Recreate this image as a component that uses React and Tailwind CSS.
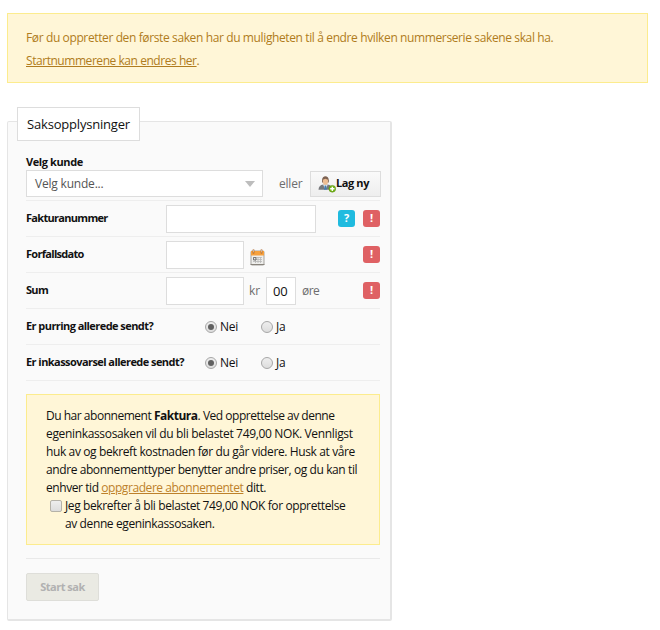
import { useState } from 'react';

function ErrorBadge() {
  return (
    <span className="flex h-[17px] w-[17px] items-center justify-center rounded-[3px] bg-[#df6164] text-[11px] font-bold text-white">
      !
    </span>
  );
}

function HelpBadge() {
  return (
    <span className="flex h-[17px] w-[17px] items-center justify-center rounded-[3px] bg-[#20bbdf] text-[11px] font-bold text-white">
      ?
    </span>
  );
}

function UserAddIcon() {
  return (
    <svg className="h-[18px] w-[18px] shrink-0" viewBox="0 0 17 17">
      <path d="M.5 14c0-3 1.500-4.500 4.500-5h4c3 .5 4.500 2 4.500 5z" fill="#77787c" />
      <path d="M4.800 9h4.400L7 14z" fill="#e9eff5" />
      <path d="M6.300 10h1.500l.5 4H5.700z" fill="#427caf" />
      <path d="M3.800 5c0-5 6.400-5 6.400 0v2H3.800z" fill="#7d6252" />
      <path d="M4.600 4.500 7 3.500l2.400 1v2C9.400 8.200 8.200 9.300 7 9.300S4.600 8.200 4.600 6.500z" fill="#edbd93" />
      <circle cx="13.500" cy="13" r="3.200" fill="#76b51b" stroke="#568d0d" strokeWidth=".5" />
      <path d="M13.500 11v4M11.500 13h4" stroke="#fff" strokeWidth="1.300" />
    </svg>
  );
}

function CalendarIcon() {
  return (
    <svg className="h-[17px] w-[15px]" viewBox="0 0 15 17">
      <rect x="1" y="2" width="13" height="14" rx="1" fill="#eeeeec" stroke="#a5a39f" />
      <path d="M.5 15.500h14" stroke="#89847c" />
      <path d="M1 2h13v4.500H1z" fill="#f6a13e" />
      <path d="M3.500.5v4M11.500.5v4" stroke="#a96024" strokeWidth="1.600" />
      <path d="M3.500 1v2.500M11.500 1v2.500" stroke="#e8d8c8" strokeWidth=".7" />
      <path d="M3 8.500h9M3 10.500h9M3 12.500h9M5.500 8v6M8 8v6M10.500 8v6" stroke="#b7b7b7" strokeWidth=".8" />
      <path d="M3.500 8.500h2.500v2.500H3.500z" fill="none" stroke="#777" />
    </svg>
  );
}

function Radio({ label, checked, onChange }) {
  return (
    <label className="flex w-14 items-center text-[12px] tracking-[-0.2px]">
      <input type="radio" className="sr-only" checked={checked} onChange={onChange} />
      <span className="mr-[3px] flex h-[12px] w-[12px] shrink-0 items-center justify-center rounded-full border border-[#a7a7a7] bg-linear-to-b from-[#eeeeee] to-[#dddddd]">
        {checked && <span className="h-[6px] w-[6px] rounded-full bg-[#606060]" />}
      </span>
      {label}
    </label>
  );
}

function Question({ label }) {
  const [answer, setAnswer] = useState('nei');

  return (
    <div className="flex h-9 items-center border-b border-[#eeeeee]">
      <span className="w-[179px] whitespace-nowrap text-[11px] font-bold tracking-[-0.56px]">{label}</span>
      <Radio label="Nei" checked={answer === 'nei'} onChange={() => setAnswer('nei')} />
      <Radio label="Ja" checked={answer === 'ja'} onChange={() => setAnswer('ja')} />
    </div>
  );
}

function Row({ label, children }) {
  return (
    <div className="flex h-9 items-center border-b border-[#eeeeee]">
      <span className="w-[140px] text-[11px] font-bold tracking-[-0.7px]">{label}</span>
      {children}
    </div>
  );
}

const input = 'h-7 border border-[#dddddd] bg-white text-[13px] tracking-[-0.3px] outline-none';

export default function App() {
  const [confirmed, setConfirmed] = useState(false);

  return (
    <div className="h-[630px] w-[660px] overflow-hidden bg-white pl-[7px] pt-[13px] font-['Open_Sans','Noto_Sans',sans-serif] text-[12px] text-[#111111]">
      <div className="h-[70px] w-[641px] border border-[#fcec8e] bg-[#fff6d7] px-[18px] pt-[12px] leading-[23px] text-[#b07c20]">
        <p className="whitespace-nowrap tracking-[-0.38px]">
          Før du oppretter den første saken har du muligheten til å endre hvilken nummerserie sakene skal ha.
        </p>
        <p className="whitespace-nowrap tracking-[-0.45px]">
          <a href="#" className="underline">Startnummerene kan endres her</a>.
        </p>
      </div>

      <div className="mt-[38px] h-[500px] w-[385px] rounded-[2px] border border-r-2 border-b-2 border-[#e5e5e5] bg-[#fafafa] px-[18px]">
        <h2 className="-mt-[15px] -ml-[9px] flex h-[34px] w-[123px] items-center justify-center border border-[#dddddd] bg-white pt-px text-[13px] tracking-[-0.2px]">
          Saksopplysninger
        </h2>

        <div className="mt-[13px] h-[47px] w-[354px] border-b border-[#eeeeee]">
          <div className="h-4 text-[11px] leading-4 font-bold tracking-[-0.4px]">Velg kunde</div>
          <div className="flex items-center">
            <div className="flex h-[27px] w-[237px] shrink-0 items-center justify-between border border-[#dddddd] bg-white pr-[7px] pl-[8px] text-[12px] tracking-[-0.2px] text-[#555555]">
              Velg kunde...
              <svg className="h-[6px] w-[10px]" viewBox="0 0 10 6">
                <path d="M0 0h10L5 6z" fill="#bdbdbd" />
              </svg>
            </div>
            <span className="w-[47px] shrink-0 pl-4 tracking-[-0.2px] text-[#6d6d6d]">eller</span>
            <button className="flex h-[26px] w-[71px] shrink-0 items-center border border-[#dddddd] bg-linear-to-b from-[#fafafa] to-[#eeeeee] pl-[7px] text-[11px] font-bold tracking-[-0.4px] whitespace-nowrap">
              <UserAddIcon />
              Lag ny
            </button>
          </div>
        </div>

        <div className="w-[354px]">
          <Row label="Fakturanummer">
            <input className={`${input} w-[150px]`} />
            <div className="ml-auto flex gap-2">
              <HelpBadge />
              <ErrorBadge />
            </div>
          </Row>
          <Row label="Forfallsdato">
            <input className={`${input} w-[78px]`} />
            <span className="mt-[5px] ml-[6px]">
              <CalendarIcon />
            </span>
            <div className="ml-auto">
              <ErrorBadge />
            </div>
          </Row>
          <Row label="Sum">
            <input className={`${input} w-[78px]`} />
            <span className="w-[22px] pl-[5px] text-[#6d6d6d]">kr</span>
            <input className={`${input} w-[30px] pl-[6px]`} defaultValue="00" />
            <span className="pl-[6px] tracking-[-0.5px] text-[#6d6d6d]">øre</span>
            <div className="ml-auto">
              <ErrorBadge />
            </div>
          </Row>
          <Question label="Er purring allerede sendt?" />
          <Question label="Er inkassovarsel allerede sendt?" />

          <div className="mt-[13px] h-[151px] border border-[#fcec8e] bg-[#fff6d7] pt-[12px] pl-[19px] leading-[18px] whitespace-nowrap">
            <p className="tracking-[-0.38px]">
              <span className="tracking-[-0.48px]">
                Du har abonnement <b className="font-bold">Faktura</b>. Ved opprettelse av denne
              </span>
              <br />
              <span className="tracking-[-0.34px]">egeninkassosaken vil du bli belastet 749,00 NOK. Vennligst</span><br />
              huk av og bekreft kostnaden før du går videre. Husk at våre<br />
              <span className="tracking-[-0.41px]">andre abonnementtyper benytter andre priser, og du kan til</span><br />
              <span className="tracking-[-0.43px]">
                enhver tid <a href="#" className="text-[#bd812b] underline">oppgradere abonnementet</a> ditt.
              </span>
            </p>
            <label className="flex tracking-[-0.39px]">
              <input type="checkbox" className="sr-only" checked={confirmed} onChange={() => setConfirmed(!confirmed)} />
              <span className="mt-[3px] mr-[3px] ml-[4px] flex h-[12px] w-[12px] items-center justify-center rounded-[2px] border border-[#b5b2a8] bg-linear-to-b from-[#eeeeee] to-[#dddddd] text-[10px]">
                {confirmed && '✓'}
              </span>
              <span>
                Jeg bekrefter å bli belastet 749,00 NOK for opprettelse<br />
                av denne egeninkassosaken.
              </span>
            </label>
          </div>

          <div className="mt-[13px] border-t border-[#e9e9e9] pt-[14px]">
            <button className="h-7 w-[73px] rounded-[2px] border border-[#deded9] bg-[#eaeae3] text-[11px] font-bold tracking-[-0.5px] text-[#b1b1b1]">
              Start sak
            </button>
          </div>
        </div>
      </div>
    </div>
  );
}
